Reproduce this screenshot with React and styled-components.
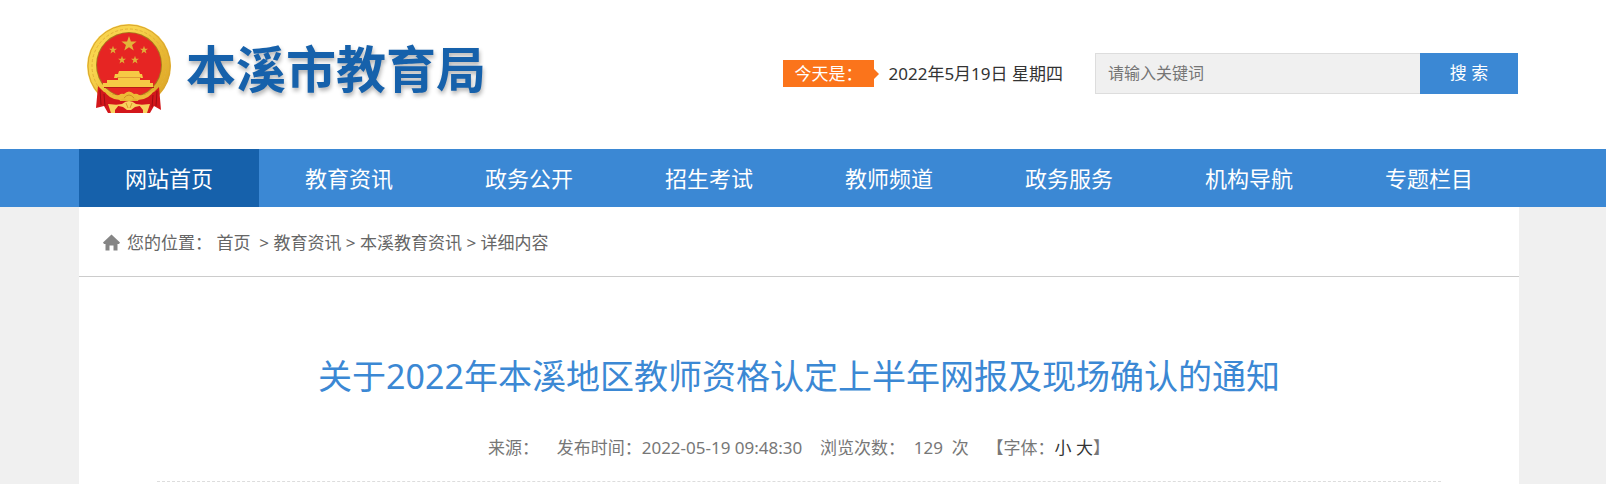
import React from "react";
import styled, {createGlobalStyle} from "styled-components";

const color = {
   blue: "#3b88d4",
   navy: "#1661ab",
   orange: "#fb741b",
   grey: "#f0f0f0",
};

const GlobalStyle = createGlobalStyle`
   * {
      box-sizing: border-box;
   }
   body {
      margin: 0;
      background: ${color.grey};
      color: #666;
      font-family: "Noto Sans", "Noto Sans CJK SC", sans-serif;
      font-size: 17px;
      line-height: 24px;
   }
   a {
      color: inherit;
      text-decoration: none;
   }
`;

const Page = styled.div`
   min-height: 100vh;
   display: flex;
   flex-flow: column nowrap;
`;

const Band = styled.div`
   padding-right: 8px;
   background: ${p => p.$fill || "transparent"};
`;

const Container = styled.div`
   max-width: 1440px;
   margin: 0 auto;
`;

const Header = styled(Container)`
   height: 149px;
   display: flex;
   align-items: flex-start;
   justify-content: space-between;
`;

const Logo = styled.a`
   display: flex;
   align-items: flex-start;
   padding: 24px 0 0 7px;
   gap: 14px;
   svg {
      width: 86px;
      height: 90px;
   }
`;

const SiteName = styled.h1`
   margin: 0;
   padding-top: 10px;
   color: ${color.navy};
   font-family: "Noto Sans CJK SC", sans-serif;
   font-size: 50px;
   font-weight: 700;
   line-height: 64px;
   text-shadow: 1px 3px 4px rgba(0, 0, 0, 0.3);
   white-space: nowrap;
`;

const Tools = styled.div`
   display: flex;
   align-items: center;
   padding: 53px 1px 0 0;
`;

const Today = styled.span`
   position: relative;
   width: 91px;
   height: 27px;
   padding-left: 12px;
   background: ${color.orange};
   color: white;
   line-height: 27px;
   &::after {
      content: "";
      position: absolute;
      left: 100%;
      top: 9px;
      border: 5px solid transparent;
      border-left-color: ${color.orange};
      border-right-width: 0;
   }
`;

const DateText = styled.span`
   padding: 0 32px 0 15px;
   color: #333;
   white-space: nowrap;
`;

const Search = styled.form`
   display: flex;
   height: 41px;
`;

const SearchInput = styled.input`
   width: 325px;
   padding: 0 12px 2px;
   border: 1px solid #ddd;
   border-right: 0;
   border-radius: 0;
   background: ${color.grey};
   font: inherit;
   font-size: 16px;
   outline: none;
   &::placeholder {
      color: #757575;
   }
`;

const SearchButton = styled.button`
   width: 98px;
   padding: 0 0 2px;
   border: 0;
   background: ${color.blue};
   color: white;
   font: inherit;
`;

const Nav = styled(Container).attrs({as: "nav"})`
   display: flex;
`;

const NavLink = styled.a`
   flex: 1;
   height: 58px;
   background: ${p => (p.$active ? color.navy : "transparent")};
   color: white;
   font-size: 22px;
   line-height: 58px;
   text-align: center;
`;

const Main = styled(Band)`
   flex: 1;
   display: flex;
   flex-flow: column nowrap;
`;

const Content = styled(Container).attrs({as: "main"})`
   flex: 1;
   width: 100%;
   background: white;
`;

const Crumbs = styled.nav`
   height: 70px;
   display: flex;
   align-items: center;
   padding: 2px 0 0 24px;
   border-bottom: 1px solid #ccc;
   white-space: pre;
   svg {
      width: 17px;
      height: 17px;
      margin-right: 7px;
   }
`;

const Article = styled.article`
   padding: 74px 78px 0;
   text-align: center;
`;

const Title = styled.h2`
   margin: 0;
   color: ${color.blue};
   font-size: 34px;
   font-weight: 400;
   line-height: 50px;
`;

const Meta = styled.div`
   display: flex;
   justify-content: center;
   margin-top: 35px;
   padding: 0 0 21px;
   border-bottom: 1px dashed #ddd;
   color: #777;
   white-space: pre;
`;

const SizeButton = styled.button`
   padding: 0;
   border: 0;
   background: none;
   color: #333;
   font: inherit;
`;

const links = [
   "网站首页",
   "教育资讯",
   "政务公开",
   "招生考试",
   "教师频道",
   "政务服务",
   "机构导航",
   "专题栏目",
];

const STAR =
   "M0 -10 L2.4 -3.2 L9.5 -3.1 L3.8 1.2 L5.9 8.1 L0 4 L-5.9 8.1 L-3.8 1.2 L-9.5 -3.1 L-2.4 -3.2Z";

const smallStars = [
   [27, 26],
   [58, 26],
   [36, 36],
   [49, 36],
];

function Emblem() {
   return (
      <svg viewBox="0 0 86 90" aria-hidden="true">
         <defs>
            <linearGradient id="gold" x1="0" y1="0" x2="1" y2="1">
               <stop offset="0" stopColor="#f6cf45" />
               <stop offset="0.3" stopColor="#f9d650" />
               <stop offset="0.6" stopColor="#e9b934" />
               <stop offset="1" stopColor="#d9a022" />
            </linearGradient>
         </defs>
         <circle cx="43" cy="42" r="42" fill="url(#gold)" />
         <circle cx="43" cy="42" r="41" fill="none" stroke="#d9a530" strokeWidth="1" />
         <circle cx="43" cy="42" r="37" fill="none" stroke="#e3b139" strokeWidth="1" strokeDasharray="3 2" />
         <circle cx="43" cy="41" r="33" fill="#a8761c" />
         <circle cx="43" cy="41" r="32" fill="#e62523" />
         <path d={STAR} transform="translate(43 20) scale(0.8)" fill="#e2b43a" />
         {smallStars.map(([x, y]) => (
            <path key={x} d={STAR} transform={`translate(${x} ${y}) scale(0.42)`} fill="#dfae38" />
         ))}
         <path
            d="M33 47 H53 L54 50 H56 L57 54 H54 V56 H64 V59 H67 V63 H17 V59 H21 V56 H32 V54 H28 L29 50 H32Z"
            fill="#f6c945"
         />
         <path d="M31 53.5 H55" stroke="#e09a35" strokeWidth="1" />
         <path d="M18 63.5 H68" stroke="#b81a16" strokeWidth="1" />
         <path
            d="M12 62 L18 68 L32 72 L34 77 H52 L54 72 L68 68 L73 63 L75 86 L68 82 L64 89 H22 L18 82 L10 84Z"
            fill="#d3171b"
         />
         <path d="M14 66 L15 81 M18 70 L19 82 M71 67 L70 82 M67 71 L66 83" stroke="#9d0d13" strokeWidth="1" />
         <path
            d="M17 65 Q26 72 33 71 Q35 69 38 70 Q43 65 48 70 Q51 69 53 71 Q60 72 69 65 Q63 76 52 76 L48 74 Q43 79 38 74 L34 76 Q23 76 17 65Z"
            fill="#edbb37"
         />
         <path d="M38 74 Q43 68 48 74" fill="none" stroke="#cf8f22" strokeWidth="1" />
         <path
            d="M28 81 L36 80 Q43 74 50 80 L58 81 L49 83 L45 86 H41 L37 83Z M22 80 L33 81 L29 86 V89 H25Z M53 81 L64 80 L61 89 H57 V86Z"
            fill="#f8d25d"
         />
         <path d="M40 79 L42 84 M46 79 L44 84" stroke="#d99b2a" strokeWidth="1" />
      </svg>
   );
}

function HomeIcon() {
   return (
      <svg viewBox="0 0 17 17" aria-hidden="true">
         <path
            d="M8.5 0.5 L17 8.5 L16 10 H14.5 V16.5 H10.5 V11.5 H6.5 V16.5 H2.5 V10 H1 L0 8.5Z"
            fill="#858585"
         />
      </svg>
   );
}

function App() {
   const [keyword, setKeyword] = React.useState("");
   const [titleSize, setTitleSize] = React.useState(34);

   return (
      <Page>
         <GlobalStyle />
         <Band $fill="white">
            <Header>
               <Logo href="#">
                  <Emblem />
                  <SiteName>本溪市教育局</SiteName>
               </Logo>
               <Tools>
                  <Today>今天是：</Today>
                  <DateText>2022年5月19日 星期四</DateText>
                  <Search onSubmit={e => e.preventDefault()}>
                     <SearchInput
                        aria-label="请输入关键词"
                        placeholder="请输入关键词"
                        value={keyword}
                        onChange={e => setKeyword(e.target.value)}
                     />
                     <SearchButton>搜 索</SearchButton>
                  </Search>
               </Tools>
            </Header>
         </Band>
         <Band $fill={color.blue}>
            <Nav>
               {links.map((link, i) => (
                  <NavLink key={link} href="#" $active={i === 0}>
                     {link}
                  </NavLink>
               ))}
            </Nav>
         </Band>
         <Main>
            <Content>
               <Crumbs>
                  <HomeIcon />
                  <span>您的位置： </span>
                  <a href="#">首页</a>
                  <span>{"  > "}</span>
                  <a href="#">教育资讯</a>
                  <span>{" > "}</span>
                  <a href="#">本溪教育资讯</a>
                  <span>{" > 详细内容"}</span>
               </Crumbs>
               <Article>
                  <Title style={{fontSize: titleSize}}>
                     关于2022年本溪地区教师资格认定上半年网报及现场确认的通知
                  </Title>
                  <Meta>
                     <span>来源：    发布时间：2022-05-19 09:48:30    </span>
                     <span>浏览次数：  129  次    【字体：</span>
                     <SizeButton onClick={() => setTitleSize(28)}>小</SizeButton>
                     <span> </span>
                     <SizeButton onClick={() => setTitleSize(34)}>大</SizeButton>
                     <span>】</span>
                  </Meta>
               </Article>
            </Content>
         </Main>
      </Page>
   );
}

export default App;
